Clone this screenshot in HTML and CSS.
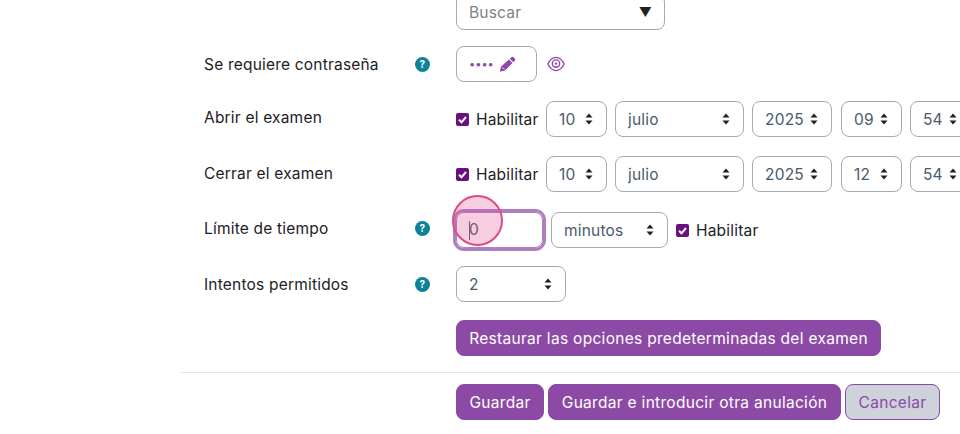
FILE: index.html
```html
<!DOCTYPE html>
<html lang="es">
<head>
  <meta charset="UTF-8" />
  <title>Anulación de examen</title>
  <link rel="stylesheet" href="styles.css">
</head>
<body>
  <form class="override-form">
    <div class="form-row row-search">
      <div class="row-label"></div>
      <div class="row-field">
        <div class="search-box">
          <span>Buscar</span>
          <span class="search-arrow">▼</span>
        </div>
      </div>
    </div>

    <div class="form-row row-password">
      <div class="row-label">
        <label>Se requiere contraseña</label>
        <span class="help-icon">?</span>
      </div>
      <div class="row-field">
        <div class="password-box">
          <span class="password-dots">••••</span>
          <svg class="pencil" viewBox="0 0 16 16" width="16" height="16"><path d="M11.300 1.200c.6-.6 1.600-.6 2.200 0l1.300 1.300c.6.6.6 1.600 0 2.200l-1.500 1.500-3.500-3.500zM8.900 3.600l3.500 3.500-7.600 7.600-4.200.9c-.4.1-.7-.2-.6-.6l.9-4.200z" fill="#8c4aa6"/><path d="M2.200 11.400l2.400 2.400" stroke="white" stroke-width=".8"/></svg>
        </div>
        <svg class="eye" viewBox="0 0 18 16" width="18" height="16"><path d="M.9 8C3 3.800 5.800 1.400 9 1.400s6 2.400 8.100 6.600c-2.100 4.200-4.900 6.600-8.100 6.600S3 12.200.9 8z" fill="none" stroke="#8c4aa6" stroke-width="1.400"/><circle cx="9" cy="7.600" r="3.700" fill="none" stroke="#8c4aa6" stroke-width="1.400"/><circle cx="9" cy="7.600" r="1.200" fill="#8c4aa6"/></svg>
      </div>
    </div>

    <div class="form-row row-open">
      <div class="row-label"><label>Abrir el examen</label></div>
      <div class="row-field">
        <label class="check"><input type="checkbox" checked /> Habilitar</label>
        <select class="sel-day"><option>10</option></select>
        <select class="sel-month"><option>julio</option></select>
        <select class="sel-year"><option>2025</option></select>
        <select class="sel-hour"><option>09</option></select>
        <select class="sel-min"><option>54</option></select>
      </div>
    </div>

    <div class="form-row row-close">
      <div class="row-label"><label>Cerrar el examen</label></div>
      <div class="row-field">
        <label class="check"><input type="checkbox" checked /> Habilitar</label>
        <select class="sel-day"><option>10</option></select>
        <select class="sel-month"><option>julio</option></select>
        <select class="sel-year"><option>2025</option></select>
        <select class="sel-hour"><option>12</option></select>
        <select class="sel-min"><option>54</option></select>
      </div>
    </div>

    <div class="form-row row-time">
      <div class="row-label">
        <label>Límite de tiempo</label>
        <span class="help-icon">?</span>
      </div>
      <div class="row-field">
        <div class="time-input">
          <span class="caret"></span>0
          <span class="click-mark"></span>
        </div>
        <select class="sel-unit"><option>minutos</option></select>
        <label class="check"><input type="checkbox" checked /> Habilitar</label>
      </div>
    </div>

    <div class="form-row row-attempts">
      <div class="row-label">
        <label>Intentos permitidos</label>
        <span class="help-icon">?</span>
      </div>
      <div class="row-field">
        <select class="sel-attempts"><option>2</option></select>
      </div>
    </div>

    <div class="form-row row-restore">
      <div class="row-label"></div>
      <div class="row-field">
        <button type="button" class="btn btn-restore">Restaurar las opciones predeterminadas del examen</button>
      </div>
    </div>

    <div class="form-actions">
      <div class="row-label"></div>
      <div class="row-field">
        <button type="submit" class="btn btn-save">Guardar</button>
        <button type="button" class="btn btn-another">Guardar e introducir otra anulación</button>
        <button type="button" class="btn btn-cancel">Cancelar</button>
      </div>
    </div>
  </form>
</body>
</html>
```

FILE: styles.css
```css
html, body {
  height: 100%;
  overflow: hidden;
}

body {
  margin: 0;
  background: white;
  font-family: Inter, "Noto Sans", Arial, sans-serif;
  font-size: 15.5px;
  letter-spacing: 0.2px;
  color: #1d2125;
}

.override-form {
  margin-top: -6px;
  width: 960px;
}

.form-row {
  display: flex;
  align-items: center;
  height: 36px;
}

.row-search { margin-bottom: 16px; }
.row-password { margin-bottom: 19px; }
.row-open { margin-bottom: 19px; }
.row-close { margin-bottom: 20px; }
.row-time { margin-bottom: 18px; }
.row-attempts { margin-bottom: 18px; }
.row-restore { margin-bottom: 16px; }

.row-label {
  box-sizing: border-box;
  flex: 0 0 456px;
  display: flex;
  justify-content: space-between;
  align-items: center;
  padding-left: 204px;
  padding-right: 26px;
  height: 36px;
}

/* labels sit a little above the middle of the taller controls */
.row-open .row-label,
.row-time .row-label { margin-top: -4px; }
.row-close .row-label { margin-top: -2px; }

.row-field {
  display: flex;
  align-items: center;
  white-space: nowrap;
}

.search-box {
  box-sizing: border-box;
  width: 209px;
  height: 36px;
  display: flex;
  justify-content: space-between;
  align-items: center;
  padding: 0 12px;
  border: 1px solid #a5a9b0;
  border-radius: 8px;
  color: #7b828a;
}

.search-arrow {
  color: #1d2125;
  font-size: 13px;
}

.help-icon {
  width: 15px;
  height: 15px;
  border-radius: 50%;
  background: #0f8299;
  color: white;
  font-size: 10px;
  font-weight: 700;
  line-height: 15px;
  text-align: center;
}

.password-box {
  box-sizing: border-box;
  width: 81px;
  height: 36px;
  display: flex;
  align-items: center;
  padding-left: 12px;
  border: 1px solid #a5a9b0;
  border-radius: 8px;
}

.password-dots {
  color: #8c4aa6;
  font-size: 11px;
  letter-spacing: 0;
}

.pencil { margin-left: 6px; }
.eye { margin-left: 10px; }

.check {
  display: flex;
  align-items: center;
  width: 82px;
  margin-right: 8px;
}

.check input {
  appearance: none;
  width: 13px;
  height: 13px;
  margin: 0 7px 0 0;
  flex-shrink: 0;
  border-radius: 2px;
  background: #6a0f80 url("data:image/svg+xml,%3Csvg xmlns='http://www.w3.org/2000/svg' viewBox='0 0 13 13'%3E%3Cpath d='M3 6.800l2.500 2.500L10 4' fill='none' stroke='white' stroke-width='2'/%3E%3C/svg%3E") center no-repeat;
}

select {
  box-sizing: border-box;
  appearance: none;
  height: 36px;
  margin-right: 8px;
  padding: 0 0 0 12px;
  border: 1px solid #a5a9b0;
  border-radius: 8px;
  background: white url("data:image/svg+xml,%3Csvg xmlns='http://www.w3.org/2000/svg' viewBox='0 0 8 12'%3E%3Cpath d='M4 0.500L7.500 4.500H0.500zM4 11.500L0.500 7.500H7.500z' fill='%231d2125'/%3E%3C/svg%3E") right 13px center / 8px 12px no-repeat;
  color: #495a6b;
  font-family: inherit;
  font-size: 15.5px;
  letter-spacing: 0.2px;
}

.sel-day { width: 61px; }
.sel-month { width: 129px; }
.sel-year { width: 80px; }
.sel-hour { width: 61px; margin-left: 1px; }
.sel-min { width: 61px; flex-shrink: 0; }
.sel-unit { width: 117px; }
.sel-attempts { width: 110px; }

.time-input {
  box-sizing: border-box;
  position: relative;
  width: 87px;
  height: 36px;
  margin-right: 8px;
  padding-left: 12px;
  border: 1px solid #ae7ec2;
  border-radius: 8px;
  box-shadow: 0 0 0 3px #ae7ec2;
  color: #495a6b;
  line-height: 34px;
}

.caret {
  display: inline-block;
  width: 1px;
  height: 19px;
  margin-right: -1px;
  background: #495a6b;
  vertical-align: middle;
}

.click-mark {
  position: absolute;
  left: -5px;
  top: -18px;
  width: 47px;
  height: 47px;
  border: 2px solid #dc4a8a;
  border-radius: 50%;
  background: rgba(222, 80, 145, 0.28);
}

.btn {
  height: 36px;
  padding: 0;
  border: 1px solid #8c4aa6;
  border-radius: 8px;
  background: #8c4aa6;
  color: white;
  font-family: inherit;
  font-size: 15.5px;
  letter-spacing: 0.3px;
  white-space: nowrap;
  cursor: pointer;
}

.btn-restore { width: 425px; }

.form-actions {
  display: flex;
  align-items: center;
  margin-left: 180px;
  padding-top: 11px;
  border-top: 1px solid #e3e8ee;
}

.form-actions .row-label {
  flex-basis: 276px;
  padding: 0;
}

.btn-save { width: 88px; margin-right: 4px; }
.btn-another { width: 293px; margin-right: 4px; }

.btn-cancel {
  width: 95px;
  background: #ced2d9;
  color: #8c4aa6;
}
```
